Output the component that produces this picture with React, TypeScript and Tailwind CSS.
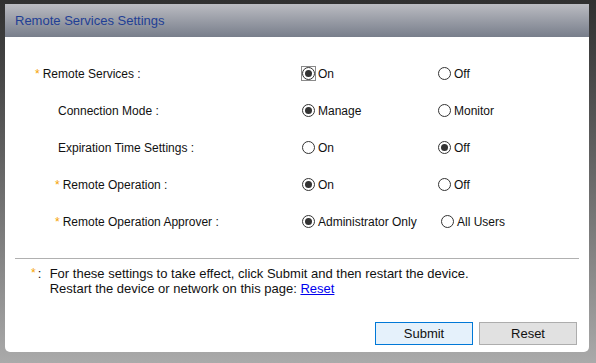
type Option = { label: string; checked?: boolean; focused?: boolean };

interface Row {
  label: string;
  required?: boolean;
  indent: "top" | "sub" | "subReq";
  options: [Option, Option];
  firstWidth?: string;
}

const rows: Row[] = [
  { label: "Remote Services :", required: true, indent: "top", options: [{ label: "On", checked: true, focused: true }, { label: "Off" }] },
  { label: "Connection Mode :", indent: "sub", options: [{ label: "Manage", checked: true }, { label: "Monitor" }] },
  { label: "Expiration Time Settings :", indent: "sub", options: [{ label: "On" }, { label: "Off", checked: true }] },
  { label: "Remote Operation :", required: true, indent: "subReq", options: [{ label: "On", checked: true }, { label: "Off" }] },
  {
    label: "Remote Operation Approver :",
    required: true,
    indent: "subReq",
    options: [{ label: "Administrator Only", checked: true }, { label: "All Users" }],
    firstWidth: "w-[139px]",
  },
];

function Radio({ checked, focused }: { checked?: boolean; focused?: boolean }) {
  return (
    <span className={focused ? "flex h-[15px] w-[15px] items-center justify-center border border-[#8a8a8a] -ml-px" : "flex h-[15px] w-[15px] items-center justify-center -ml-px"}>
      <span className="flex h-[13px] w-[13px] items-center justify-center rounded-full border border-[#333] bg-white">
        {checked && <span className="h-[7px] w-[7px] rounded-full bg-[#333]" />}
      </span>
    </span>
  );
}

function RadioOption({ option, className }: { option: Option; className?: string }) {
  return (
    <label className={`flex items-center gap-[2px] ${className ?? ""}`}>
      <Radio checked={option.checked} focused={option.focused} />
      <span>{option.label}</span>
    </label>
  );
}

function Asterisk() {
  return <span className="text-[#f5a300] mr-[3px]">*</span>;
}

export default function App() {
  return (
    <div
      className="h-[363px] w-[596px] overflow-hidden bg-linear-to-b from-[#303030] via-[#6a6a6a] to-[#aaaaaa] pl-[5px] pt-[4px] text-[12px] text-[#111]"
      style={{ fontFamily: '"Liberation Sans", Arial, sans-serif' }}
    >
      <div className="flex h-[348px] w-[584px] flex-col rounded-b-[5px] bg-white">
        {/* Header */}
        <div className="flex h-[33px] items-center bg-linear-to-b from-[#bbbcc2] to-[#787e8b] pl-[10px] pt-[1px]">
          <h1 className="text-[13px] text-[#1f3f95]">Remote Services Settings</h1>
        </div>

        {/* Settings rows */}
        <div className="pt-[18px]">
          {rows.map((row) => (
            <div key={row.label} className="flex h-[37px] items-center">
              <div
                className={
                  row.indent === "top"
                    ? "w-[297px] pl-[30px]"
                    : row.indent === "sub"
                      ? "w-[297px] pl-[53px]"
                      : "w-[297px] pl-[50px]"
                }
              >
                {row.required && <Asterisk />}
                {row.label}
              </div>
              <RadioOption option={row.options[0]} className={row.firstWidth ?? "w-[136px]"} />
              <RadioOption option={row.options[1]} />
            </div>
          ))}
        </div>

        <hr className="mx-[10px] mt-[18px] border-t border-[#b0b0b0]" />

        {/* Footnote */}
        <div className="flex pl-[26px] pt-[7px] text-[13px] leading-[15px]">
          <span className="text-[12px] text-[#f5a300]">*</span>
          <span className="ml-[2px] w-[12px]">:</span>
          <div>
            <p>For these settings to take effect, click Submit and then restart the device.</p>
            <p>
              Restart the device or network on this page:{" "}
              <a href="#" className="text-[#0000ee] underline">
                Reset
              </a>
            </p>
          </div>
        </div>

        {/* Buttons */}
        <div className="mt-[26px] flex justify-end gap-[6px] pr-[12px]">
          <button className="h-[23px] w-[98px] border border-[#0078d7] bg-[#e5f1fb] text-[13px]">Submit</button>
          <button className="h-[23px] w-[98px] border border-[#adadad] bg-[#e1e1e1] text-[13px]">Reset</button>
        </div>
      </div>
    </div>
  );
}
